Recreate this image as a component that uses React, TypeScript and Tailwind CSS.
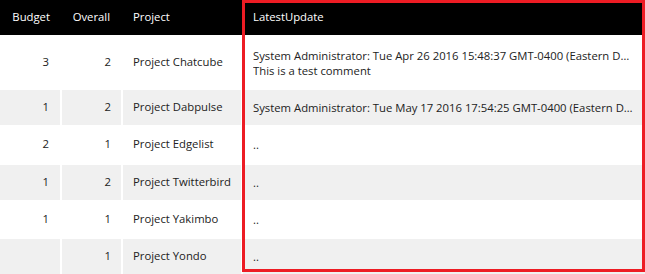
import React from "react";

type Row = {
  budget: string;
  overall: string;
  project: string;
  update: string[];
};

const rows: Row[] = [
  {
    budget: "3",
    overall: "2",
    project: "Project Chatcube",
    update: [
      "System Administrator: Tue Apr 26 2016 15:48:37 GMT-0400 (Eastern Daylight Time)",
      "This is a test comment",
    ],
  },
  {
    budget: "1",
    overall: "2",
    project: "Project Dabpulse",
    update: ["System Administrator: Tue May 17 2016 17:54:25 GMT-0400 (Eastern Daylight Time)"],
  },
  { budget: "2", overall: "1", project: "Project Edgelist", update: [".."] },
  { budget: "1", overall: "2", project: "Project Twitterbird", update: [".."] },
  { budget: "1", overall: "1", project: "Project Yakimbo", update: [".."] },
  { budget: "", overall: "1", project: "Project Yondo", update: [".."] },
];

const cols = "grid grid-cols-[60px_59px_118px_1fr] gap-x-[2px]";

export default function App() {
  return (
    <div
      className="relative w-[645px] h-[274px] overflow-hidden bg-white text-[11.3px] text-[#222]"
      style={{ fontFamily: '"Segoe UI", "Open Sans", "Noto Sans", sans-serif' }}
    >
      <div className="flex flex-col gap-y-[2px]">
        <div className={`${cols} h-[35px] bg-black text-white font-medium`}>
          <div className="flex items-center justify-end pr-[10px]">Budget</div>
          <div className="flex items-center justify-end pr-[11px]">Overall</div>
          <div className="flex items-center pl-[10px]">Project</div>
          <div className="flex items-center pl-[10px]">LatestUpdate</div>
        </div>
        {rows.map((r, i) => {
          const bg = i % 2 === 1 ? "bg-[#f0f0f0]" : "bg-white";
          const h = i === 0 ? "h-[51px]" : "h-[35.25px]";
          return (
            <div key={r.project} className={`${cols} ${h}`}>
              <div className={`${bg} flex items-center justify-end pr-[11px]`}>{r.budget}</div>
              <div className={`${bg} flex items-center justify-end pr-[10px]`}>{r.overall}</div>
              <div className={`${bg} flex items-center pl-[10px] whitespace-nowrap`}>{r.project}</div>
              <div className={`${bg} flex flex-col justify-center pl-[10px] pr-[11px] min-w-0 leading-[15px]`}>
                {r.update.map((line) => (
                  <div key={line} className="truncate">
                    {line}
                  </div>
                ))}
              </div>
            </div>
          );
        })}
      </div>
      <div className="pointer-events-none absolute left-[242px] top-0 w-[403px] h-[272px] border-[3px] border-[#ed1c24]" />
    </div>
  );
}
